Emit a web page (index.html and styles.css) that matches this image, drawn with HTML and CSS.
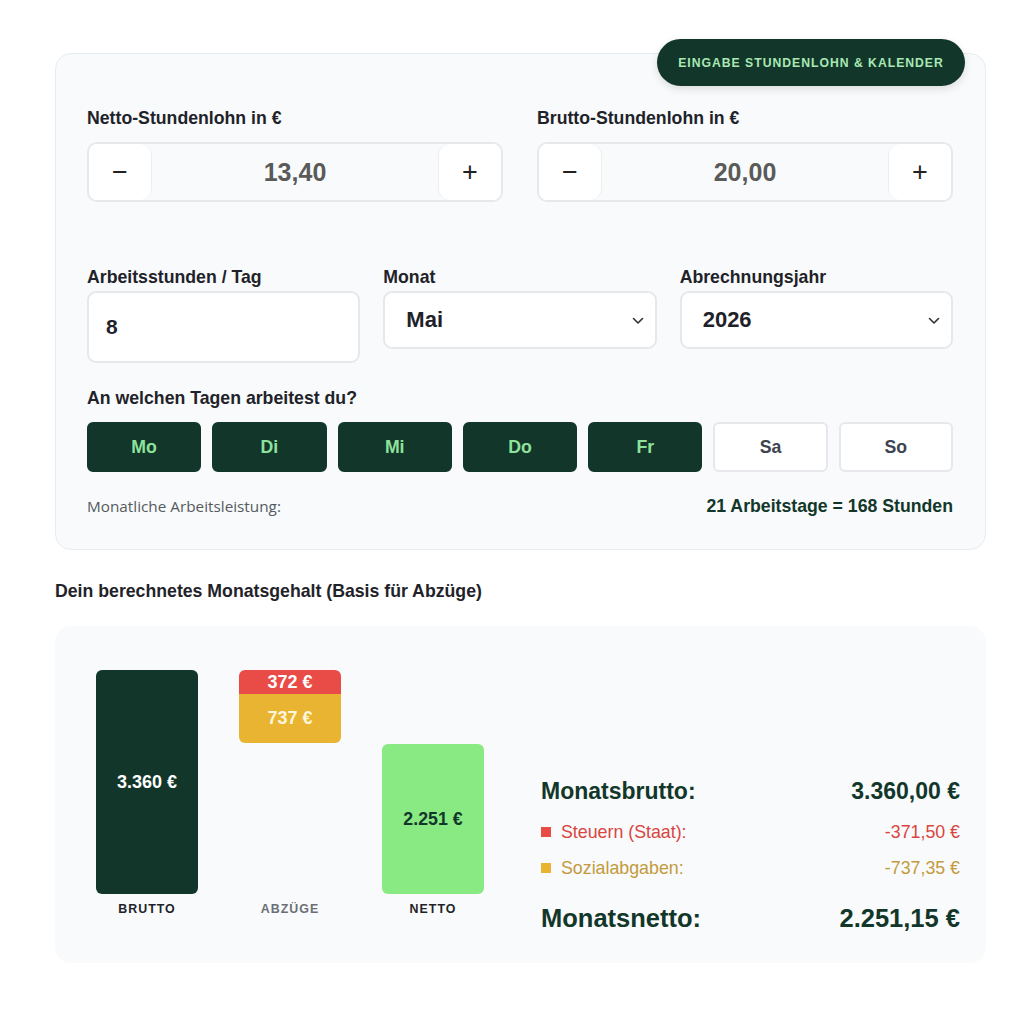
FILE: index.html
```html
<!DOCTYPE html>
<html lang="de">
<head>
<meta charset="utf-8">
<title>Stundenlohn Rechner</title>
<link rel="stylesheet" href="styles.css">
</head>
<body>
<div class="page">
  <section class="card input-card">
    <div class="badge">Eingabe Stundenlohn &amp; Kalender</div>

    <div class="row-two">
      <div class="field">
        <div class="label">Netto-Stundenlohn in €</div>
        <div class="stepper">
          <button class="step-btn minus" type="button">−</button>
          <div class="step-value">13,40</div>
          <button class="step-btn plus" type="button">+</button>
        </div>
      </div>
      <div class="field">
        <div class="label">Brutto-Stundenlohn in €</div>
        <div class="stepper">
          <button class="step-btn minus" type="button">−</button>
          <div class="step-value">20,00</div>
          <button class="step-btn plus" type="button">+</button>
        </div>
      </div>
    </div>

    <div class="row-three">
      <div class="field">
        <div class="label small-gap">Arbeitsstunden / Tag</div>
        <div class="text-input">8</div>
      </div>
      <div class="field">
        <div class="label small-gap">Monat</div>
        <div class="select">
          <span>Mai</span>
          <svg class="chev" width="12" height="8" viewBox="0 0 12 8"><path d="M1.5 1.5 L6 6 L10.5 1.5" fill="none" stroke="#333" stroke-width="1.6" stroke-linecap="round" stroke-linejoin="round"/></svg>
        </div>
      </div>
      <div class="field">
        <div class="label small-gap">Abrechnungsjahr</div>
        <div class="select">
          <span>2026</span>
          <svg class="chev" width="12" height="8" viewBox="0 0 12 8"><path d="M1.5 1.5 L6 6 L10.5 1.5" fill="none" stroke="#333" stroke-width="1.6" stroke-linecap="round" stroke-linejoin="round"/></svg>
        </div>
      </div>
    </div>

    <div class="label days-label">An welchen Tagen arbeitest du?</div>
    <div class="days">
      <button class="day on" type="button">Mo</button>
      <button class="day on" type="button">Di</button>
      <button class="day on" type="button">Mi</button>
      <button class="day on" type="button">Do</button>
      <button class="day on" type="button">Fr</button>
      <button class="day" type="button">Sa</button>
      <button class="day" type="button">So</button>
    </div>

    <div class="summary-line">
      <span class="muted">Monatliche Arbeitsleistung:</span>
      <span class="strong">21 Arbeitstage = 168 Stunden</span>
    </div>
  </section>

  <h2 class="section-title">Dein berechnetes Monatsgehalt (Basis für Abzüge)</h2>

  <section class="card result-card">
    <div class="chart">
      <div class="col">
        <div class="bar-area">
          <div class="bar brutto">3.360 €</div>
        </div>
        <div class="bar-label">BRUTTO</div>
      </div>
      <div class="col">
        <div class="bar-area top">
          <div class="stack">
            <div class="seg tax">372 €</div>
            <div class="seg social">737 €</div>
          </div>
        </div>
        <div class="bar-label grey">ABZÜGE</div>
      </div>
      <div class="col">
        <div class="bar-area bottom">
          <div class="bar netto">2.251 €</div>
        </div>
        <div class="bar-label">NETTO</div>
      </div>
    </div>

    <div class="totals">
      <div class="t-row big">
        <span>Monatsbrutto:</span>
        <span>3.360,00 €</span>
      </div>
      <div class="t-row tax-row">
        <span class="t-name"><i class="sq red"></i>Steuern (Staat):</span>
        <span>-371,50 €</span>
      </div>
      <div class="t-row soc-row">
        <span class="t-name"><i class="sq yellow"></i>Sozialabgaben:</span>
        <span>-737,35 €</span>
      </div>
      <div class="t-row bigger">
        <span>Monatsnetto:</span>
        <span>2.251,15 €</span>
      </div>
    </div>
  </section>
</div>
</body>
</html>
```

FILE: styles.css
```css
* { box-sizing: border-box; }

body {
  margin: 0;
  background: #ffffff;
  font-family: "Liberation Sans", Arial, sans-serif;
  color: #1f2937;
}

.page {
  width: 931px;
  margin-left: 55px;
  padding-top: 53px;
}

.card {
  background: #f8fafb;
  border-radius: 16px;
}

.input-card {
  position: relative;
  border: 1px solid #e9ecef;
  padding: 54px 32px 33px 31px;
}

.badge {
  position: absolute;
  top: -15px;
  right: 20px;
  width: 308px;
  height: 47px;
  border-radius: 24px;
  background: #12372a;
  color: #a9e8b4;
  font-size: 12.2px;
  font-weight: 700;
  letter-spacing: 1px;
  text-transform: uppercase;
  display: flex;
  align-items: center;
  justify-content: center;
  box-shadow: 0 3px 8px rgba(0, 0, 0, 0.12);
}

.label {
  font-size: 17.7px;
  font-weight: 700;
  line-height: 20px;
  color: #1f2329;
  margin-bottom: 14px;
}

.label.small-gap { margin-bottom: 4px; }

.row-two {
  display: grid;
  grid-template-columns: 1fr 1fr;
  gap: 34px;
}

.stepper {
  display: flex;
  height: 60px;
  border: 2px solid #e6e8eb;
  border-radius: 10px;
  background: #f8fafb;
  overflow: hidden;
}

.step-btn {
  width: 63px;
  border: none;
  background: #ffffff;
  font-family: "Liberation Sans", Arial, sans-serif;
  font-size: 27px;
  color: #222;
  padding: 0;
}

.step-btn.minus { border-right: 1px solid #eceef0; border-radius: 0 12px 12px 0; }
.step-btn.plus { border-left: 1px solid #eceef0; border-radius: 12px 0 0 12px; }

.step-value {
  flex: 1;
  display: flex;
  align-items: center;
  justify-content: center;
  font-size: 25px;
  font-weight: 700;
  color: #5a5a5a;
}

.row-three {
  display: grid;
  grid-template-columns: repeat(3, 1fr);
  gap: 23px;
  margin-top: 65px;
  align-items: start;
}

.text-input {
  height: 72px;
  background: #ffffff;
  border: 2px solid #e6e8eb;
  border-radius: 9px;
  padding-left: 17px;
  display: flex;
  align-items: center;
  font-size: 21px;
  font-weight: 700;
  color: #1f2329;
}

.select {
  height: 58px;
  background: #ffffff;
  border: 2px solid #e6e8eb;
  border-radius: 9px;
  padding: 0 11px 0 21px;
  display: flex;
  align-items: center;
  justify-content: space-between;
  font-size: 22px;
  font-weight: 700;
  color: #1f2329;
}

.chev { display: block; margin-top: 1px; }

.days-label {
  margin-top: 25px;
  margin-bottom: 14px;
}

.days {
  display: grid;
  grid-template-columns: repeat(7, 1fr);
  gap: 11px;
}

.day {
  height: 50px;
  border-radius: 6px;
  border: 2px solid #e6e8eb;
  background: #ffffff;
  color: #3d4450;
  font-family: "Liberation Sans", Arial, sans-serif;
  font-size: 17.7px;
  font-weight: 700;
}

.day.on {
  background: #12372a;
  border-color: #12372a;
  color: #8fe29c;
}

.summary-line {
  margin-top: 24px;
  display: flex;
  justify-content: space-between;
  align-items: center;
  height: 20px;
}

.muted {
  font-family: "Open Sans", sans-serif;
  font-size: 15.3px;
  color: #555a60;
}

.strong {
  font-size: 17.7px;
  font-weight: 700;
  color: #12372a;
}

.section-title {
  margin: 31px 0 0 0;
  font-size: 17.7px;
  font-weight: 700;
  line-height: 20px;
  color: #1f2329;
}

.result-card {
  margin-top: 25px;
  display: flex;
  padding: 44px 26px 31px 41px;
}

.chart {
  display: flex;
  gap: 41px;
}

.col {
  width: 102px;
  display: flex;
  flex-direction: column;
  align-items: center;
}

.bar-area {
  height: 224px;
  width: 100%;
  display: flex;
  flex-direction: column;
}

.bar-area.top { justify-content: flex-start; }
.bar-area.bottom { justify-content: flex-end; }

.bar {
  display: flex;
  align-items: center;
  justify-content: center;
  border-radius: 6px;
  font-weight: 700;
}

.bar.brutto {
  height: 224px;
  background: #12372a;
  color: #ffffff;
  font-size: 18px;
}

.bar.netto {
  height: 150px;
  background: #89ea84;
  color: #12372a;
  font-size: 17.8px;
}

.stack {
  border-radius: 6px;
  overflow: hidden;
}

.seg {
  display: flex;
  align-items: center;
  justify-content: center;
  font-weight: 700;
  font-size: 18px;
}

.seg.tax {
  height: 24px;
  background: #e94b47;
  color: #ffffff;
}

.seg.social {
  height: 49px;
  background: #e8b431;
  color: #fff6dc;
}

.bar-label {
  margin-top: 8px;
  font-size: 12.4px;
  line-height: 14px;
  font-weight: 700;
  letter-spacing: 1px;
  color: #1f2329;
}

.bar-label.grey { color: #6b6f75; }

.totals {
  margin-left: 57px;
  flex: 1;
  padding-top: 108px;
}

.t-row {
  display: flex;
  justify-content: space-between;
  align-items: center;
}

.t-row.big {
  font-size: 23px;
  font-weight: 700;
  line-height: 26px;
  color: #12372a;
}

.t-row.tax-row {
  margin-top: 17px;
  font-size: 17.8px;
  line-height: 22px;
  color: #d9453f;
}

.t-row.soc-row {
  margin-top: 14px;
  font-size: 17.8px;
  line-height: 22px;
  color: #c39a3d;
}

.t-row.bigger {
  margin-top: 25px;
  font-size: 25.5px;
  font-weight: 700;
  line-height: 28px;
  color: #12372a;
}

.t-name {
  display: flex;
  align-items: center;
}

.sq {
  display: inline-block;
  width: 10px;
  height: 10px;
  margin-right: 10px;
}

.sq.red { background: #e94b47; }
.sq.yellow { background: #e8b431; }
```
